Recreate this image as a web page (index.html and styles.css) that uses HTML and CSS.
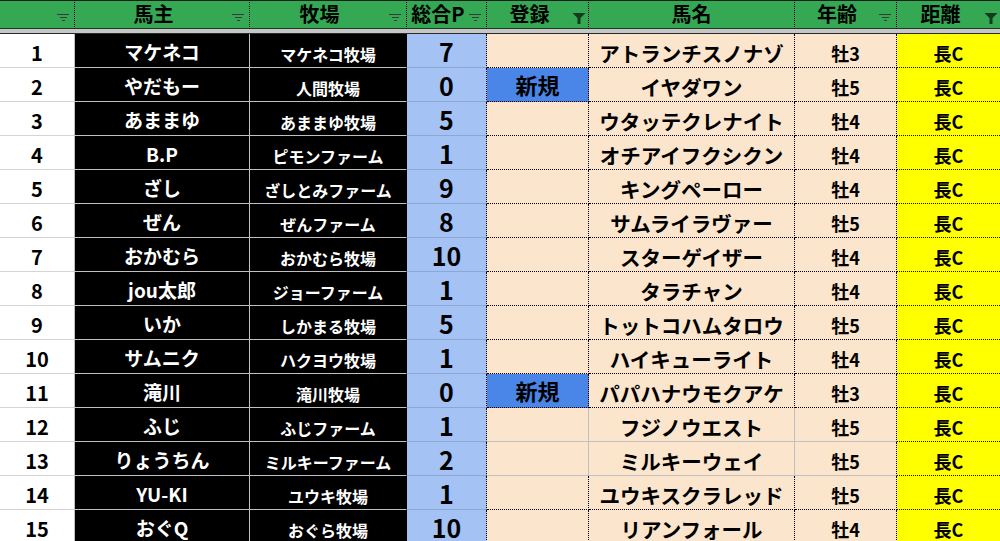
FILE: index.html
```html
<!DOCTYPE html>
<html lang="ja">
<head>
<meta charset="utf-8">
<title>馬主一覧</title>
<link rel="stylesheet" href="styles.css">
</head>
<body>
<div class="sheet">
  <div class="hd"><span class="lbl"></span><svg class="flt" viewBox="0 0 13 8"><path d="M0 0.5H12M3 3.5H10M5 6.5H8" stroke="#3a3a3a" stroke-width="1"/></svg></div>
  <div class="hd"><span class="lbl">馬主</span><svg class="flt" viewBox="0 0 13 8"><path d="M0 0.5H12M3 3.5H10M5 6.5H8" stroke="#3a3a3a" stroke-width="1"/></svg></div>
  <div class="hd"><span class="lbl">牧場</span><svg class="flt" viewBox="0 0 13 8"><path d="M0 0.5H12M3 3.5H10M5 6.5H8" stroke="#3a3a3a" stroke-width="1"/></svg></div>
  <div class="hd"><span class="lbl">総合P</span><svg class="flt" viewBox="0 0 13 8"><path d="M0 0.5H12M3 3.5H10M5 6.5H8" stroke="#3a3a3a" stroke-width="1"/></svg></div>
  <div class="hd"><span class="lbl">登録</span><svg class="flt on" viewBox="0 0 13 11"><path d="M0 0H13L8 5V11H5V5Z" fill="#17391f"/></svg></div>
  <div class="hd"><span class="lbl lbl-full">馬名</span></div>
  <div class="hd"><span class="lbl">年齢</span><svg class="flt" viewBox="0 0 13 8"><path d="M0 0.5H12M3 3.5H10M5 6.5H8" stroke="#3a3a3a" stroke-width="1"/></svg></div>
  <div class="hd last"><span class="lbl">距離</span><svg class="flt on" viewBox="0 0 13 11"><path d="M0 0H13L8 5V11H5V5Z" fill="#17391f"/></svg></div>
  <div class="band"></div>
</div>
<div class="sheet body" id="rows"></div>
<script src="app.js"></script>
</body>
</html>
```
FILE: app.js
```js
const data = [
  [1,"マケネコ","マケネコ牧場","7","","アトランチスノナゾ","牡3"],
  [2,"やだもー","人間牧場","0","新規","イヤダワン","牡5"],
  [3,"あままゆ","あままゆ牧場","5","","ウタッテクレナイト","牡4"],
  [4,"B.P","ピモンファーム","1","","オチアイフクシクン","牡4"],
  [5,"ざし","ざしとみファーム","9","","キングペーロー","牡4"],
  [6,"ぜん","ぜんファーム","8","","サムライラヴァー","牡5"],
  [7,"おかむら","おかむら牧場","10","","スターゲイザー","牡4"],
  [8,"jou太郎","ジョーファーム","1","","タラチャン","牡4"],
  [9,"いか","しかまる牧場","5","","トットコハムタロウ","牡5"],
  [10,"サムニク","ハクヨウ牧場","1","","ハイキューライト","牡4"],
  [11,"滝川","滝川牧場","0","新規","パパハナウモクアケ","牡3"],
  [12,"ふじ","ふじファーム","1","","フジノウエスト","牡5"],
  [13,"りょうちん","ミルキーファーム","2","","ミルキーウェイ","牡5"],
  [14,"YU-KI","ユウキ牧場","1","","ユウキスクラレッド","牡5"],
  [15,"おぐQ","おぐら牧場","10","","リアンフォール","牡4"]
];
const root = document.getElementById("rows");
const cls = ["c-no","c-owner","c-farm","c-pt","c-reg","c-name","c-age","c-dist"];
data.forEach(r => {
  const vals = [r[0], r[1], r[2], r[3], r[4], r[5], r[6], "長C"];
  const plain = r[0] === 12 || r[0] === 13;
  vals.forEach((v, i) => {
    const d = document.createElement("div");
    d.className = "cell " + cls[i];
    if (i === 4 && v === "新規") d.classList.add("new");
    if (plain && (i === 4 || i === 5 || i === 6)) d.classList.add("plain");
    const s = document.createElement("span");
    s.textContent = v;
    d.appendChild(s);
    root.appendChild(d);
  });
});
```
FILE: styles.css
```css
html, body {
  margin: 0;
  padding: 0;
  background: #ffffff;
  overflow: hidden;
}
body {
  width: 1000px;
  height: 541px;
  font-family: "Noto Sans CJK JP", "Noto Sans", sans-serif;
  font-weight: 700;
  color: #000;
}
.sheet {
  display: grid;
  grid-template-columns: 75px 175px 157px 80px 102px 206px 102px 103px;
}
.hd {
  height: 29px;
  box-sizing: border-box;
  background: #34a853;
  border-top: 1px solid #1d1d1d;
  border-bottom: 1px solid #1b3b22;
  border-right: 1px dotted #000;
  display: flex;
  align-items: center;
  font-size: 20px;
  line-height: 1;
}
.hd.last { border-right: none; }
.lbl {
  flex: 1;
  text-align: center;
  padding-bottom: 2px;
}
.flt {
  width: 13px;
  height: 8px;
  margin-right: 4px;
  margin-top: 6px;
  flex: none;
}
.flt.on {
  width: 14px;
  height: 11px;
  margin-right: 2px;
  margin-top: 8px;
}
.band {
  grid-column: 1 / -1;
  height: 5px;
  box-sizing: border-box;
  background: #c6c6c6;
  border-bottom: 1px solid #2a2a2a;
}
.cell {
  height: 34px;
  box-sizing: border-box;
  border-right: 1px solid #c0c0c0;
  border-bottom: 1px solid #c0c0c0;
  display: flex;
  align-items: center;
  justify-content: center;
  line-height: 1.1;
  white-space: nowrap;
}
.c-no {
  background: #fff;
  font-size: 20px;
  padding-top: 5px;
  border-bottom-color: #d4d4d4;
  border-right-color: #c0c0c0;
}
.c-owner {
  background: #000;
  color: #fff;
  font-size: 19px;
  padding-top: 4px;
}
.c-farm {
  background: #000;
  color: #fff;
  font-size: 16px;
  align-items: flex-end;
  padding-bottom: 3px;
  border-right-color: #000;
}
.c-pt {
  background: #a4c2f4;
  font-size: 25px;
  padding-top: 3px;
  border-bottom-color: #8ea7d2;
  border-right: 1px dotted #000;
}
.c-reg, .c-name, .c-age, .c-dist {
  background: #fce5cd;
  border-right: 1px dotted #000;
  border-bottom: 1px dotted #000;
}
.c-reg { font-size: 22px; }
.c-reg.new { background: #4a86e8; }
.c-name { font-size: 20.5px; padding-top: 5px; }
.c-age { font-size: 18px; padding-top: 6px; }
.c-dist {
  background: #ffff00;
  font-size: 18px;
  padding-top: 6px;
  border-right: none;
}
.cell.plain {
  border-right: 1px solid #c0c0c0;
  border-bottom: 1px solid #c0c0c0;
}
.c-age.plain { border-right: 1px dotted #000; }
```
